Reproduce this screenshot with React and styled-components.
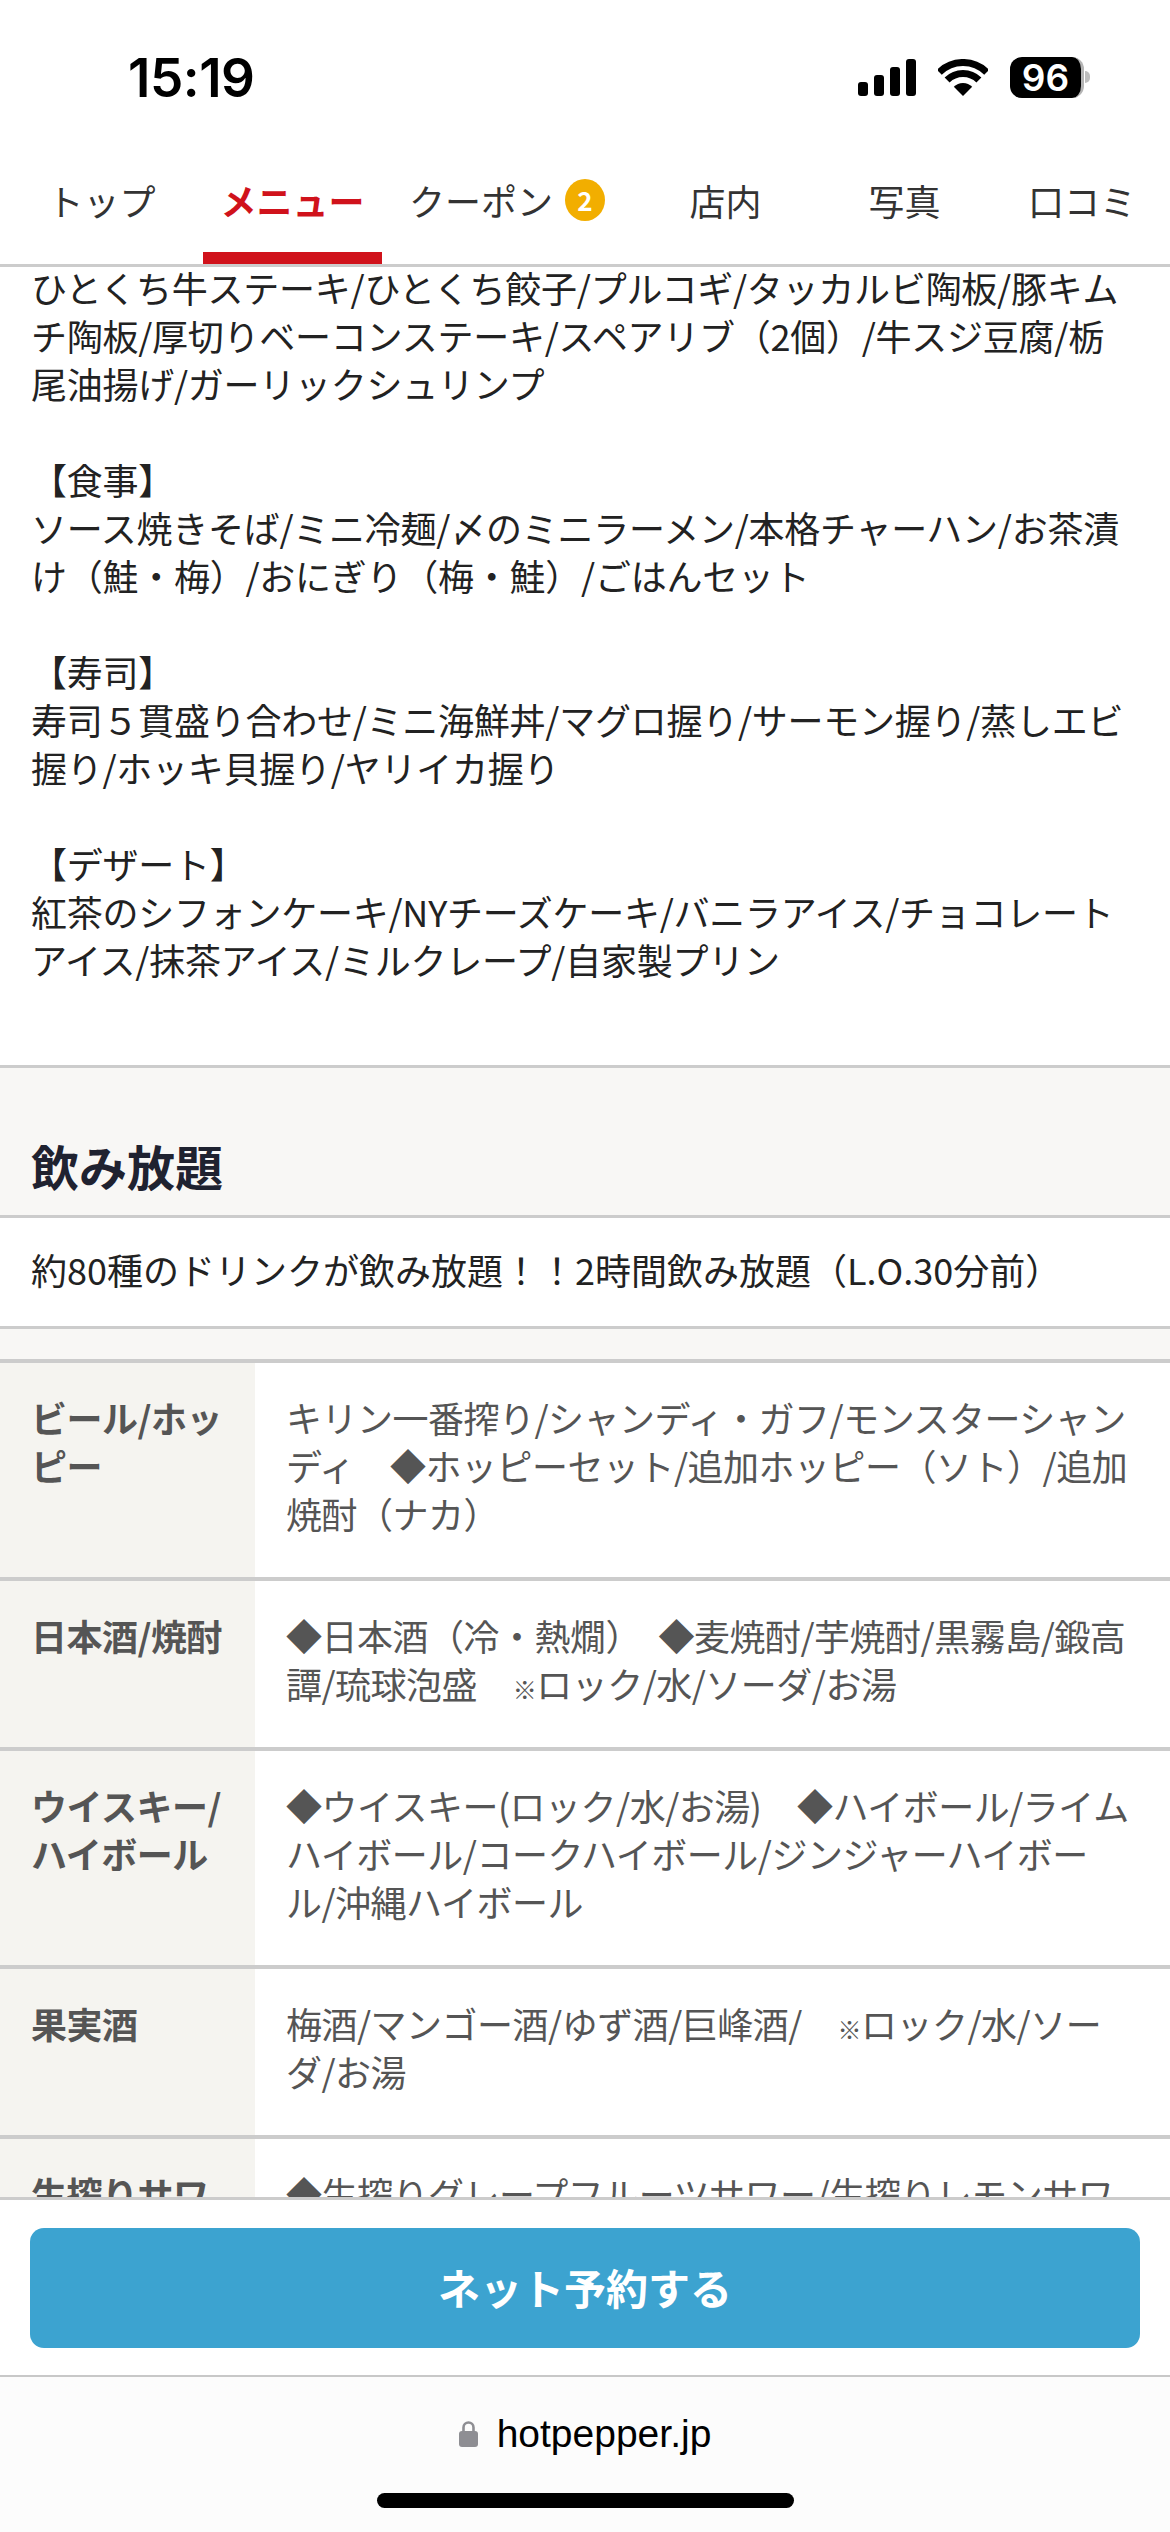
import React from "react";
import styled, { createGlobalStyle } from "styled-components";

const Global = createGlobalStyle`
  html, body { margin: 0; padding: 0; background: #fff; }
  * { box-sizing: border-box; }
`;

const JP = `"Noto Sans CJK JP", "Noto Sans", sans-serif`;

const tabs = [
  { label: "トップ", width: 203 },
  { label: "メニュー", width: 179, active: true },
  { label: "クーポン", width: 254, badge: 2 },
  { label: "店内", width: 179 },
  { label: "写真", width: 179 },
  { label: "口コミ", width: 176 },
];

const paragraphs = [
  [
    "ひとくち牛ステーキ/ひとくち餃子/プルコギ/タッカルビ陶板/豚キム",
    "チ陶板/厚切りベーコンステーキ/スペアリブ（2個）/牛スジ豆腐/栃",
    "尾油揚げ/ガーリックシュリンプ",
  ],
  [
    "【食事】",
    "ソース焼きそば/ミニ冷麺/〆のミニラーメン/本格チャーハン/お茶漬",
    "け（鮭・梅）/おにぎり（梅・鮭）/ごはんセット",
  ],
  [
    "【寿司】",
    "寿司５貫盛り合わせ/ミニ海鮮丼/マグロ握り/サーモン握り/蒸しエビ",
    "握り/ホッキ貝握り/ヤリイカ握り",
  ],
  [
    "【デザート】",
    "紅茶のシフォンケーキ/NYチーズケーキ/バニラアイス/チョコレート",
    "アイス/抹茶アイス/ミルクレープ/自家製プリン",
  ],
];

const Note = styled.span`
  font-size: 24px;
  line-height: 1;
`;

const drinks = [
  {
    name: ["ビール/ホッ", "ピー"],
    lines: [
      "キリン一番搾り/シャンディ・ガフ/モンスターシャン",
      "ディ　◆ホッピーセット/追加ホッピー（ソト）/追加",
      "焼酎（ナカ）",
    ],
  },
  {
    name: ["日本酒/焼酎"],
    lines: [
      "◆日本酒（冷・熱燗）\u2002◆麦焼酎/芋焼酎/黒霧島/鍛高",
      <>譚/琉球泡盛　<Note>※</Note>ロック/水/ソーダ/お湯</>,
    ],
  },
  {
    name: ["ウイスキー/", "ハイボール"],
    lines: [
      "◆ウイスキー(ロック/水/お湯)　◆ハイボール/ライム",
      "ハイボール/コークハイボール/ジンジャーハイボー",
      "ル/沖縄ハイボール",
    ],
  },
  {
    name: ["果実酒"],
    lines: [
      <>梅酒/マンゴー酒/ゆず酒/巨峰酒/　<Note>※</Note>ロック/水/ソー</>,
      "ダ/お湯",
    ],
  },
  {
    name: ["生搾りサワ", "ー"],
    lines: ["◆生搾りグレープフルーツサワー/生搾りレモンサワ", "ー"],
  },
];

export default function App() {
  return (
    <Screen>
      <Global />
      <StatusBar>
        <Clock>15:19</Clock>
        <StatusIcons>
          <svg width="58" height="37" viewBox="0 0 58 37" fill="#000">
            <rect x="0" y="23" width="10" height="14" rx="3" />
            <rect x="16" y="16" width="10" height="21" rx="3" />
            <rect x="32" y="8" width="10" height="29" rx="3" />
            <rect x="48" y="0" width="10" height="37" rx="3" />
          </svg>
          <svg width="50" height="37" viewBox="0 0 50 37">
            <path d="M1.3 13.3A33.5 33.5 0 0 1 48.7 13.3" fill="none" stroke="#000" strokeWidth="7" />
            <path d="M9.1 21.1A22.5 22.5 0 0 1 40.9 21.1" fill="none" stroke="#000" strokeWidth="7" />
            <path d="M25 37L15.8 27.8A13 13 0 0 1 34.2 27.8Z" fill="#000" />
          </svg>
          <Battery>96</Battery>
        </StatusIcons>
      </StatusBar>

      <TabBar>
        {tabs.map((t) => (
          <Tab key={t.label} $width={t.width} $active={t.active}>
            {t.label}
            {t.badge && <Badge>{t.badge}</Badge>}
          </Tab>
        ))}
      </TabBar>

      <Scroller>
        <MenuText>
          {paragraphs.map((lines, i) => (
            <Paragraph key={i}>
              {lines.map((l) => (
                <Line key={l}>{l}</Line>
              ))}
            </Paragraph>
          ))}
        </MenuText>

        <SectionHead>
          <SectionTitle>飲み放題</SectionTitle>
        </SectionHead>
        <Lead>約80種のドリンクが飲み放題！！2時間飲み放題（L.O.30分前）</Lead>
        <Spacer />

        <DrinkTable>
          {drinks.map((d) => (
            <DrinkRow key={d.name[0]}>
              <DrinkName>
                {d.name.map((n) => (
                  <Line key={n}>{n}</Line>
                ))}
              </DrinkName>
              <DrinkItems>
                {d.lines.map((l, i) => (
                  <Line key={i}>{l}</Line>
                ))}
              </DrinkItems>
            </DrinkRow>
          ))}
        </DrinkTable>
      </Scroller>

      <ActionBar>
        <ReserveButton>ネット予約する</ReserveButton>
      </ActionBar>

      <BrowserBar>
        <Address>
          <svg width="19" height="26" viewBox="0 0 19 26">
            <path d="M4.5 12V6.5a5 5 0 0 1 10 0V12" fill="none" stroke="#8e8e93" strokeWidth="2.6" />
            <rect x="0" y="10" width="19" height="16" rx="3" fill="#8e8e93" />
          </svg>
          <Domain>hotpepper.jp</Domain>
        </Address>
        <HomeIndicator />
      </BrowserBar>
    </Screen>
  );
}

const Screen = styled.div`
  width: 1170px;
  height: 2532px;
  display: flex;
  flex-direction: column;
  overflow: hidden;
  background: #fff;
  font-family: ${JP};
`;

const StatusBar = styled.div`
  height: 132px;
  flex: none;
  display: flex;
  align-items: flex-start;
  justify-content: space-between;
  padding: 50px 86px 0 128px;
`;

const Clock = styled.div`
  font-family: Inter, "Liberation Sans", sans-serif;
  font-size: 53px;
  line-height: 56px;
  font-weight: 600;
  letter-spacing: -0.5px;
  color: #000;
`;

const StatusIcons = styled.div`
  display: flex;
  align-items: center;
  gap: 22px;
  margin-top: 7px;
`;

const Battery = styled.div`
  position: relative;
  width: 74px;
  height: 41px;
  border-radius: 12px;
  background: #000;
  border-right: 3px solid #b5b5b5;
  color: #fff;
  font-family: Inter, "Liberation Sans", sans-serif;
  font-size: 37px;
  line-height: 41px;
  font-weight: 600;
  text-align: center;

  &::after {
    content: "";
    position: absolute;
    right: -9px;
    top: 14px;
    width: 5px;
    height: 12px;
    border-radius: 0 6px 6px 0;
    background: #bdbdbd;
  }
`;

const TabBar = styled.div`
  height: 135px;
  flex: none;
  display: flex;
  border-bottom: 3px solid #ccc;
`;

const Tab = styled.div`
  width: ${(p) => p.$width}px;
  flex: none;
  display: flex;
  align-items: center;
  justify-content: center;
  gap: 12px;
  padding-top: 16px;
  font-size: 36px;
  font-weight: ${(p) => (p.$active ? 700 : 400)};
  color: ${(p) => (p.$active ? "#d0121b" : "#333")};
  border-bottom: 12px solid ${(p) => (p.$active ? "#d0121b" : "transparent")};
  white-space: nowrap;
`;

const Badge = styled.span`
  width: 40px;
  height: 42px;
  margin-right: 4px;
  border-radius: 50%;
  background: #f2ae00;
  color: #fff;
  font-size: 26px;
  font-weight: 700;
  line-height: 42px;
  text-align: center;
`;

const Scroller = styled.div`
  flex: 1;
  min-height: 0;
  overflow: hidden;
`;

const MenuText = styled.div`
  margin-top: -4px;
  padding: 0 31px 82px;
  display: flex;
  flex-direction: column;
  gap: 48px;
  font-size: 36px;
  line-height: 48px;
  letter-spacing: -0.25px;
  color: #222;
`;

const Paragraph = styled.div``;

const Line = styled.div`
  white-space: nowrap;
`;

const SectionHead = styled.div`
  height: 153px;
  background: #f8f7f5;
  border-top: 3px solid #ccc;
  border-bottom: 3px solid #ccc;
  padding: 65px 31px 0;
`;

const SectionTitle = styled.h2`
  margin: 0;
  font-size: 48px;
  line-height: 64px;
  font-weight: 700;
  color: #1f2230;
`;

const Lead = styled.div`
  padding: 27px 31px 33px;
  font-size: 36px;
  line-height: 48px;
  color: #222;
  white-space: nowrap;
`;

const Spacer = styled.div`
  height: 33px;
  background: #f8f7f5;
  border-top: 3px solid #ccc;
`;

const DrinkTable = styled.div`
  display: flex;
  flex-direction: column;
`;

const DrinkRow = styled.div`
  display: grid;
  grid-template-columns: 255px 1fr;
  border-top: 4px solid #ccc;
  font-size: 36px;
  line-height: 48px;
  color: #555;
`;

const DrinkName = styled.div`
  background: #f5f4f0;
  padding: 30px 0 40px 31px;
  font-weight: 700;
  letter-spacing: -0.5px;
`;

const DrinkItems = styled.div`
  padding: 30px 0 40px 31px;
  letter-spacing: -0.5px;
`;

const ActionBar = styled.div`
  height: 180px;
  flex: none;
  display: flex;
  padding: 28px 30px;
  background: #fff;
  border-top: 3px solid #ccc;
  border-bottom: 2px solid #c8c8c8;
`;

const ReserveButton = styled.div`
  flex: 1;
  height: 120px;
  padding-bottom: 4px;
  border-radius: 14px;
  background: #3ca3d0;
  color: #fff;
  font-size: 42px;
  font-weight: 700;
  display: flex;
  align-items: center;
  justify-content: center;
`;

const BrowserBar = styled.div`
  height: 155px;
  flex: none;
  background: #fcfcfc;
  display: flex;
  flex-direction: column;
  align-items: center;
  padding-top: 33px;
`;

const Address = styled.div`
  display: flex;
  align-items: center;
  gap: 19px;
`;

const Domain = styled.span`
  font-family: "Liberation Sans", Arial, sans-serif;
  font-size: 39px;
  line-height: 48px;
  color: #000;
`;

const HomeIndicator = styled.div`
  width: 417px;
  height: 15px;
  margin-top: 35px;
  border-radius: 8px;
  background: #000;
`;
